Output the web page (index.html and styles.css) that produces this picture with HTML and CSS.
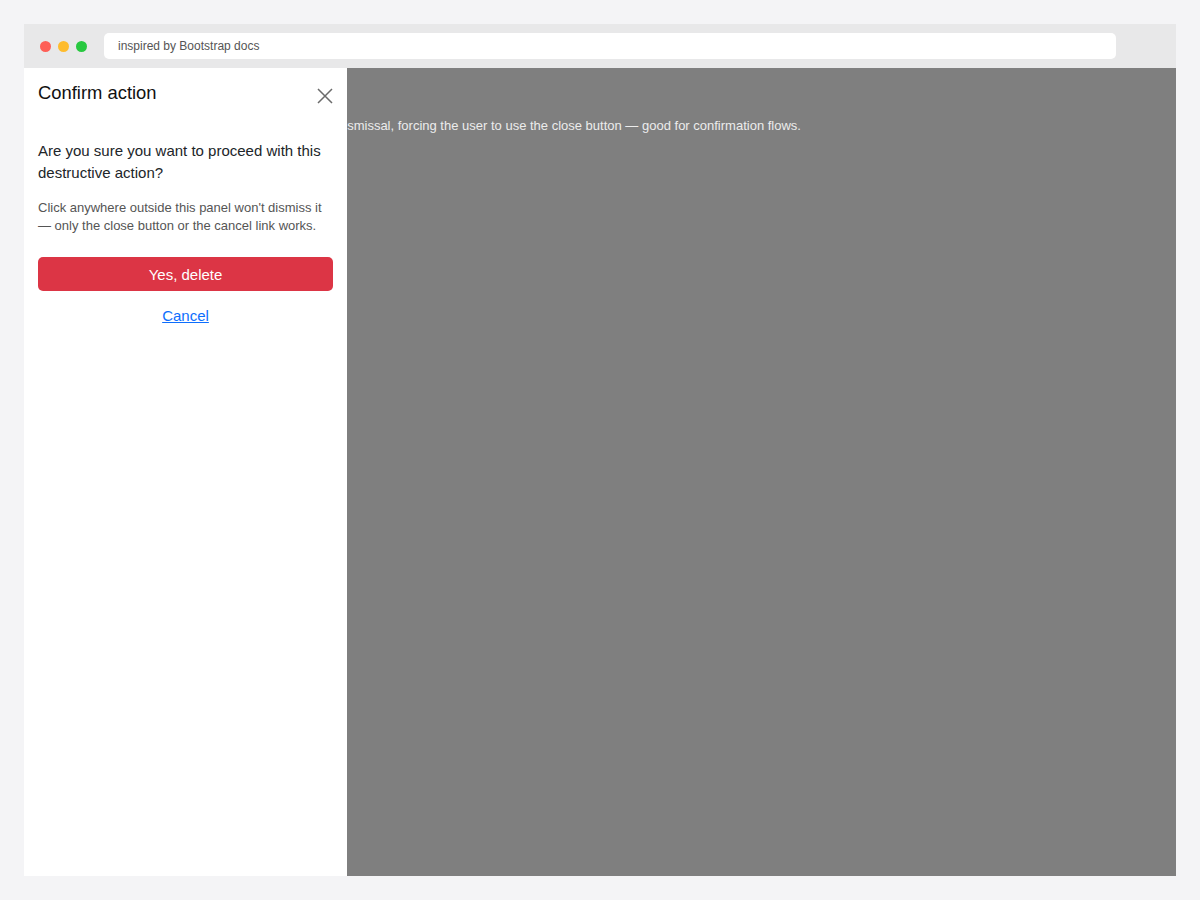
FILE: index.html
```html
<!DOCTYPE html>
<html lang="en">
    <head>
        <meta charset="utf-8">
        <meta name="viewport" content="width=device-width, initial-scale=1">
        <title>Offcanvas static backdrop</title>
        <link rel="stylesheet" href="styles.css">
    </head>
    <body>
        <div class="window">
            <div class="toolbar">
                <div class="dots">
                    <span class="dot red"></span>
                    <span class="dot yellow"></span>
                    <span class="dot green"></span>
                </div>
                <div class="urlbar">inspired by Bootstrap docs</div>
            </div>
            <div class="viewport">
                <div class="page">
                    <p class="lead">A static backdrop disables outside-click dismissal, forcing the user to use the close button — good for confirmation flows.</p>
                </div>
                <div class="backdrop"></div>
                <div class="offcanvas">
                    <div class="offcanvas-header">
                        <h5 class="title">Confirm action</h5>
                        <button type="button" class="btn-close" aria-label="Close">
                            <svg width="16" height="16" viewBox="0 0 16 16">
                                <path d="M1 1 L15 15 M15 1 L1 15" stroke="#6b6b6b" stroke-width="1.5" fill="none"/>
                            </svg>
                        </button>
                    </div>
                    <div class="offcanvas-body">
                        <p class="question">Are you sure you want to proceed with this destructive action?</p>
                        <p class="note">Click anywhere outside this panel won't dismiss it — only the close button or the cancel link works.</p>
                        <button type="button" class="btn-danger">Yes, delete</button>
                        <a href="#" class="cancel">Cancel</a>
                    </div>
                </div>
            </div>
        </div>
    </body>
</html>
```

FILE: styles.css
```css
body {
    margin: 0;
    background: #f4f4f6;
    font-family: "Liberation Sans", Arial, sans-serif;
}

.window {
    margin: 24px;
    height: 852px;
    display: flex;
    flex-direction: column;
    background: #fff;
}

.toolbar {
    height: 44px;
    background: #e8e8e9;
    display: flex;
    align-items: center;
    padding: 0 12px 0 16px;
    gap: 17px;
    flex-shrink: 0;
}

.dots {
    display: flex;
    gap: 7px;
}

.dot {
    width: 11px;
    height: 11px;
    border-radius: 50%;
}

.dot.red { background: #fe5f57; }
.dot.yellow { background: #febc2e; }
.dot.green { background: #28c840; }

.urlbar {
    width: 1012px;
    height: 26px;
    background: #fff;
    border-radius: 5px;
    display: flex;
    align-items: center;
    padding-left: 14px;
    font-size: 12px;
    color: #555;
    box-sizing: border-box;
}

.viewport {
    position: relative;
    flex: 1;
    overflow: hidden;
}

.page {
    position: relative;
    z-index: 2;
    padding: 49px 0 0 84px;
}

.lead {
    margin: 0;
    font-size: 13px;
    line-height: 18px;
    color: #ececec;
}

.backdrop {
    position: absolute;
    inset: 0;
    background: rgba(0, 0, 0, 0.5);
}

.offcanvas {
    position: absolute;
    top: 0;
    left: 0;
    bottom: 0;
    width: 323px;
    background: #fff;
    z-index: 3;
}

.offcanvas-header {
    display: flex;
    align-items: flex-start;
    justify-content: space-between;
    padding: 14px 14px 0 14px;
}

.title {
    margin: 0;
    font-size: 18.4px;
    line-height: 22px;
    font-weight: 500;
    color: #111;
}

.btn-close {
    border: 0;
    background: none;
    padding: 0;
    margin-top: 6px;
    width: 16px;
    height: 16px;
}

.offcanvas-body {
    padding: 36px 14px 14px 14px;
    display: flex;
    flex-direction: column;
}

.question {
    margin: 0 0 15px;
    font-size: 15px;
    line-height: 22px;
    color: #212529;
}

.note {
    margin: 0 0 22px;
    font-size: 13px;
    line-height: 18px;
    color: #555;
}

.btn-danger {
    height: 34px;
    border: 0;
    border-radius: 5px;
    background: #dc3545;
    color: #fff;
    font-family: inherit;
    font-size: 15px;
}

.cancel {
    align-self: center;
    margin-top: 16px;
    font-size: 15px;
    line-height: 18px;
    color: #0d6efd;
}
```
